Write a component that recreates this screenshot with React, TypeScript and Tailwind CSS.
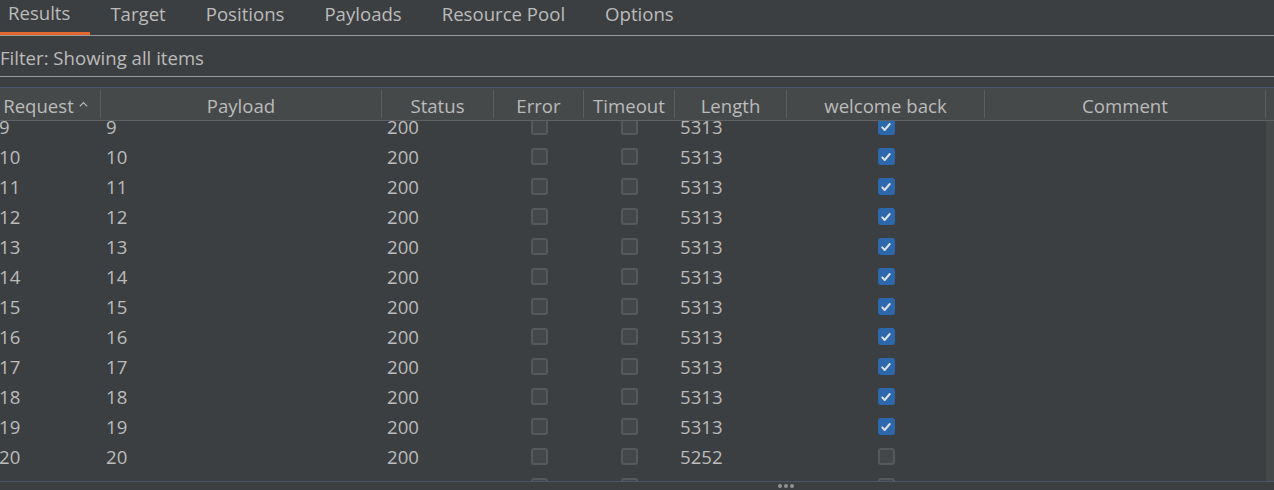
import type { ReactNode } from "react";

/* Intruder results pane — dark IDE style */

const FONT = "font-['Open_Sans','Noto_Sans',sans-serif]";

const tabs = ["Results", "Target", "Positions", "Payloads", "Resource Pool", "Options"];

type Col = { key: string; label: string; width: string };

const cols: Col[] = [
  { key: "req", label: "Request", width: "w-[109px]" },
  { key: "payload", label: "Payload", width: "w-[281px]" },
  { key: "status", label: "Status", width: "w-[112px]" },
  { key: "error", label: "Error", width: "w-[90px]" },
  { key: "timeout", label: "Timeout", width: "w-[91px]" },
  { key: "length", label: "Length", width: "w-[112px]" },
  { key: "welcome", label: "welcome back", width: "w-[198px]" },
  { key: "comment", label: "Comment", width: "w-[281px]" },
];

const rows = Array.from({ length: 13 }, (_, i) => {
  const n = i + 9;
  return {
    n,
    status: 200,
    length: n >= 20 ? 5252 : 5313,
    match: n < 20,
  };
});

function Checkbox({ checked }: { checked?: boolean }) {
  if (checked) {
    return (
      <span className="w-[17px] h-[17px] rounded-[3px] bg-[#2d68ad] flex items-center justify-center">
        <svg viewBox="0 0 16 16" className="w-[12px] h-[12px]" fill="none" stroke="#dfe1e5" strokeWidth="2.6" strokeLinecap="round" strokeLinejoin="round">
          <path d="M3 8.5l3.2 3.5L13 4" />
        </svg>
      </span>
    );
  }
  return <span className="w-[17px] h-[17px] rounded-[3px] border-2 border-[#56595b] bg-[#43474a]" />;
}

function Cell({ width, children, center, first }: { width: string; children?: ReactNode; center?: boolean; first?: boolean }) {
  return (
    <div
      className={`${width} shrink-0 h-full flex items-center pt-[1px] ${center ? "justify-center" : first ? "pl-[7px]" : "pl-[5px]"}`}
    >
      {children}
    </div>
  );
}

export default function App() {
  return (
    <div className={`w-[1274px] h-[490px] overflow-hidden bg-[#3c3f41] text-[#bbbbbb] ${FONT} text-[18.6px] flex flex-col`}>
      {/* tabs */}
      <div className="h-[36px] shrink-0 flex -ml-[12px] border-b border-[#9a9a9a]">
        {tabs.map((t, i) => (
          <div
            key={t}
            className={`px-5 h-full flex items-center leading-none pb-[6px] ${i === 0 ? "border-b-[3px] border-[#e1682f] pb-[3px]" : ""}`}
          >
            {t}
          </div>
        ))}
      </div>

      {/* filter */}
      <div className="h-[41px] shrink-0 flex items-center pt-[4px] border-b border-[#9a9a9a]">
        Filter: Showing all items
      </div>

      <div className="h-[11px] shrink-0 border-b border-[#4a5670]" />

      {/* header */}
      <div className="h-[33px] shrink-0 flex bg-[#45494a] border-b border-[#5f6264] -ml-[8px]">
        {cols.map((c) => (
          <div key={c.key} className={`${c.width} shrink-0 flex items-center justify-center py-[2px]`}>
            <div className="w-full h-full flex items-center justify-center pt-[4px] border-r border-[#5b5e60]">
              {c.label}
              {c.key === "req" && (
                <svg viewBox="0 0 12 12" className="w-[11px] h-[11px] ml-[4px] mb-[3px]" fill="none" stroke="#bbbbbb" strokeWidth="1.3">
                  <path d="M2 8l4-4 4 4" />
                </svg>
              )}
            </div>
          </div>
        ))}
        <div className="flex-1" />
      </div>

      {/* body */}
      <div className="flex-1 flex min-h-0 border-b border-[#4a5670]">
        <div className="flex-1 overflow-hidden -ml-[8px]">
          <div className="-mt-[10px]">
            {rows.map((r) => (
              <div key={r.n} className="h-[30px] flex">
                <Cell width="w-[109px]" first>{r.n}</Cell>
                <Cell width="w-[281px]">{r.n}</Cell>
                <Cell width="w-[112px]">{r.status}</Cell>
                <Cell width="w-[90px]" center><Checkbox /></Cell>
                <Cell width="w-[91px]" center><Checkbox /></Cell>
                <Cell width="w-[112px]">{r.length}</Cell>
                <Cell width="w-[198px]" center><Checkbox checked={r.match} /></Cell>
                <Cell width="w-[281px]" />
              </div>
            ))}
          </div>
        </div>
        <div className="w-[8px] shrink-0 bg-[#45494a]" />
      </div>

      {/* splitter */}
      <div className="h-[8px] shrink-0 flex items-center gap-[2px] pl-[778px]">
        <span className="w-[4px] h-[4px] rounded-full bg-[#8f9294]" />
        <span className="w-[4px] h-[4px] rounded-full bg-[#8f9294]" />
        <span className="w-[4px] h-[4px] rounded-full bg-[#8f9294]" />
      </div>
    </div>
  );
}
